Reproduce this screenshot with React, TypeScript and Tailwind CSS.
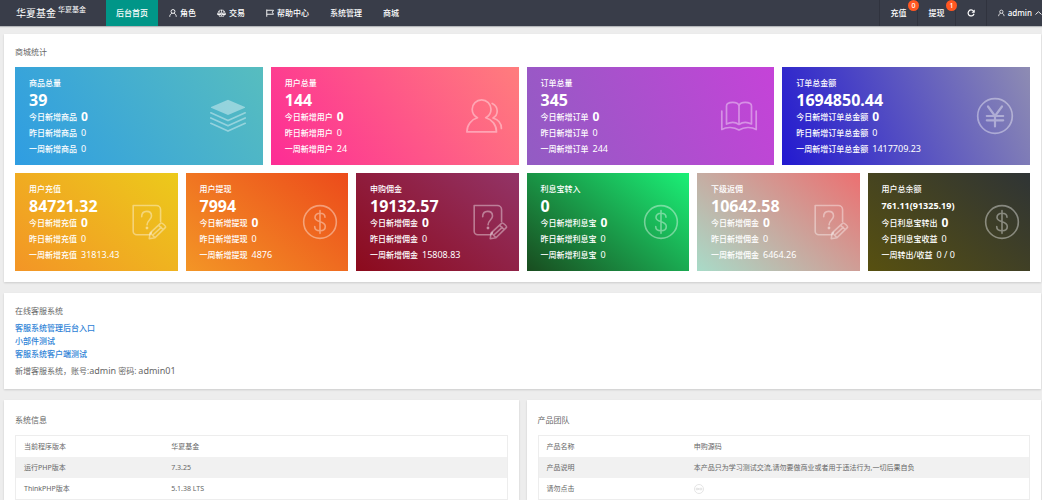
import React from "react";

type IconName = "layers" | "users" | "book" | "yen" | "survey" | "dollar";

interface Stat {
  title: string;
  total: string;
  smallTotal?: boolean;
  rows: [string, string][];
  icon: IconName;
  tone: string;
}

const overview: Stat[] = [
  {
    title: "商品总量",
    total: "39",
    rows: [["今日新增商品", "0"], ["昨日新增商品", "0"], ["一周新增商品", "0"]],
    icon: "layers",
    tone: "bg-linear-55/srgb from-[#2f9de2] to-[#57bdbf]",
  },
  {
    title: "用户总量",
    total: "144",
    rows: [["今日新增用户", "0"], ["昨日新增用户", "0"], ["一周新增用户", "24"]],
    icon: "users",
    tone: "bg-linear-55/srgb from-[#fd2c95] to-[#ff7d7d]",
  },
  {
    title: "订单总量",
    total: "345",
    rows: [["今日新增订单", "0"], ["昨日新增订单", "0"], ["一周新增订单", "244"]],
    icon: "book",
    tone: "bg-linear-67/srgb from-[#925cc3] to-[#c543d8]",
  },
  {
    title: "订单总金额",
    total: "1694850.44",
    rows: [["今日新增订单总金额", "0"], ["昨日新增订单总金额", "0"], ["一周新增订单总金额", "1417709.23"]],
    icon: "yen",
    tone: "bg-linear-67/srgb from-[#2219d0] to-[#8e8cb3]",
  },
];

const finance: Stat[] = [
  {
    title: "用户充值",
    total: "84721.32",
    rows: [["今日新增充值", "0"], ["昨日新增充值", "0"], ["一周新增充值", "31813.43"]],
    icon: "survey",
    tone: "bg-linear-39/srgb from-[#f39526] to-[#ecca1b]",
  },
  {
    title: "用户提现",
    total: "7994",
    rows: [["今日新增提现", "0"], ["昨日新增提现", "0"], ["一周新增提现", "4876"]],
    icon: "dollar",
    tone: "bg-linear-39/srgb from-[#f39526] to-[#ec4b1b]",
  },
  {
    title: "申购佣金",
    total: "19132.57",
    rows: [["今日新增佣金", "0"], ["昨日新增佣金", "0"], ["一周新增佣金", "15808.83"]],
    icon: "survey",
    tone: "bg-linear-39/srgb from-[#8c0a1c] to-[#933467]",
  },
  {
    title: "利息宝转入",
    total: "0",
    rows: [["今日新增利息宝", "0"], ["昨日新增利息宝", "0"], ["一周新增利息宝", "0"]],
    icon: "dollar",
    tone: "bg-linear-39/srgb from-[#194c1f] to-[#1bf077]",
  },
  {
    title: "下级返佣",
    total: "10642.58",
    rows: [["今日新增佣金", "0"], ["昨日新增佣金", "0"], ["一周新增佣金", "6464.26"]],
    icon: "survey",
    tone: "bg-linear-39/srgb from-[#a8dbc8] to-[#ec7071]",
  },
  {
    title: "用户总余额",
    total: "761.11(91325.19)",
    smallTotal: true,
    rows: [["今日利息宝转出", "0"], ["今日利息宝收益", "0"], ["一周转出/收益", "0 / 0"]],
    icon: "dollar",
    tone: "bg-linear-39/srgb from-[#575010] to-[#2f3435]",
  },
];

function CardIcon({ name }: { name: IconName }) {
  return (
    <svg
      viewBox="0 0 36 36"
      className="size-full overflow-visible"
      fill="none"
      stroke="currentColor"
      strokeWidth="1.7"
      strokeLinecap="round"
      strokeLinejoin="round"
      aria-hidden="true"
    >
      {name === "layers" && (
        <>
          <path d="M18 1.700 35 9v.8L18 17 1 9.800V9z" fill="currentColor" stroke="none" />
          <path d="M.8 14.800 18 22.600l17.200-7.800M.8 20 18 27.800 35.200 20M.8 25.300 18 33.100l17.200-7.800" />
        </>
      )}
      {name === "users" && (
        <>
          <path d="M11.500 19.700C8.400 18 6.200 14.900 6.200 11.200a9.400 9.400 0 0 1 18.800 0c0 3.700-2.200 6.800-5.300 8.500 6.400 1.800 10.800 7.300 10.800 14.200H.9c0-6.900 4.200-12.400 10.600-14.200z" />
          <path d="M26.200 5.500c3 1.500 5 4.200 5 7.500 0 3.100-1.700 5.600-4.200 7 5.200 1.500 8.400 5.500 8.400 10.500" />
        </>
      )}
      {name === "book" && (
        <>
          <path d="M5.500 26V8c0-2.400 3-3.700 6.200-3.700S18 5.700 18 8.200c0-2.500 3-3.900 6.300-3.900S30.500 5.600 30.500 8v18c-4.500-2.300-9-2-12.500.5-3.500-2.500-8-2.800-12.500-.5zM18 8.200v18.300" />
          <path d="M.8 13v18.500c5-3 12.200-2.500 17.200.5 5-3 12.200-3.500 17.200-.5V13" />
        </>
      )}
      {name === "yen" && (
        <>
          <circle cx="18" cy="18" r="17.300" />
          <path d="m11 8.500 7 9.500 7-9.500M18 18v10.500M9.800 18h16.400M9.800 22.300h16.400" strokeWidth="2.200" />
        </>
      )}
      {name === "dollar" && (
        <>
          <circle cx="18" cy="18" r="17.300" />
          <path d="M18 6v24M23.300 13c0-2.700-2.200-4.300-5.300-4.300s-5.300 1.700-5.300 4.300c0 6.300 10.900 3.400 10.900 9.700 0 2.800-2.300 4.600-5.600 4.600s-5.600-1.800-5.600-4.600" />
        </>
      )}
      {name === "survey" && (
        <>
          <path d="M17.500 31.500H4A3.800 3.800 0 0 1 .2 27.700V.6h24.600a4.400 4.400 0 0 1 4.400 4.400v12.500M17.500 31.500l2-2.500" />
          <path d="M9.200 12.500c0-3.500 2-5.700 5.200-5.700s5.200 2 5.200 4.900c0 4-4.700 4.500-4.700 9.300" />
          <circle cx="14.800" cy="24.300" r=".7" fill="currentColor" />
          <path d="m17.200 35.700 1-6.200L29.400 19.200c1-.9 5.800 3.300 5 4.500L23.300 34.700zM18.500 29.700l4.600 4.800M27.200 21.500l4.800 4.500M21.900 31l8-7.300" />
        </>
      )}
    </svg>
  );
}

function StatCard({ stat, wide }: { stat: Stat; wide?: boolean }) {
  return (
    <article
      className={`flex items-center justify-between ${stat.tone} ${wide ? "pr-[17px]" : "pr-[11px]"} py-2 pl-[14px] text-white`}
    >
      <div className="whitespace-nowrap text-[8px] leading-4">
        <h3 className="mb-px font-medium">{stat.title}</h3>
        <p className={`mb-px leading-4 font-bold ${stat.smallTotal ? "text-[9px]" : "text-base/4"}`}>{stat.total}</p>
        {stat.rows.map(([label, value], i) => (
          <p key={label} className="flex h-4 items-center gap-1 font-medium">
            <span>{label}</span>
            <span className={i === 0 ? "text-xs/4 font-bold" : "text-[9px] leading-4 font-normal"}>{value}</span>
          </p>
        ))}
      </div>
      <div className={`${wide ? "size-9" : "size-[34px]"} shrink-0 text-white/40`}>
        <CardIcon name={stat.icon} />
      </div>
    </article>
  );
}

function UserIcon() {
  return (
    <svg viewBox="0 0 16 16" className="size-2" fill="none" stroke="currentColor" strokeWidth="1.800" aria-hidden="true">
      <circle cx="8" cy="5" r="3.900" />
      <path d="M1.500 15.500c0-4 2-6 4.800-7M14.500 15.500c0-4-2-6-4.800-7" />
    </svg>
  );
}

function ScaleIcon() {
  return (
    <svg viewBox="0 0 18 16" className="h-2 w-[9px]" fill="none" stroke="currentColor" strokeWidth="1.400" aria-hidden="true">
      <path d="M9 1v13M4 14.500h10M3 4.500C5 2 7 2 9 3c2-1 4-1 6 1.500M4 4 1 10h6.500zM14 4l-3.500 6H17z" />
      <path d="M1 10c.5 3 6 3 6.500 0zM10.500 10c.5 3 6 3 6.500 0z" fill="currentColor" />
    </svg>
  );
}

function FlagIcon() {
  return (
    <svg viewBox="0 0 16 16" className="size-2" fill="none" stroke="currentColor" strokeWidth="1.800" aria-hidden="true">
      <path d="M1.500 1v14.500M1.500 2.500h13.500L12.500 6.500l2.500 4H1.500" />
    </svg>
  );
}

const navItems: { label: string; icon?: React.ReactNode; active?: boolean }[] = [
  { label: "后台首页", active: true },
  { label: "角色", icon: <UserIcon /> },
  { label: "交易", icon: <ScaleIcon /> },
  { label: "帮助中心", icon: <FlagIcon /> },
  { label: "系统管理" },
  { label: "商城" },
];

function Header() {
  return (
    <header className="flex h-[26px] items-stretch bg-[#393d49] text-[8px] font-medium text-white shadow-[0_1px_1px_#b5b7ba]">
      <a href="#home" className="flex w-[106px] shrink-0 items-center gap-[2px] pl-4 text-[10px] font-normal">
        华夏基金
        <span className="mb-[5px] text-[7px]">华夏基金</span>
      </a>
      <nav className="flex gap-px">
        {navItems.map((item) => (
          <a
            key={item.label}
            href="#nav"
            className={`flex items-center gap-[3px] whitespace-nowrap px-[10px] ${item.active ? "bg-[#009688]" : ""}`}
          >
            {item.icon}
            {item.label}
          </a>
        ))}
      </nav>
      <div className="ml-auto flex">
        <PendingLink label="充值" count={0} />
        <PendingLink label="提现" count={1} />
        <button type="button" aria-label="刷新" className="flex w-[31px] items-center justify-center border-l border-[#30333e]">
          <svg viewBox="0 0 16 16" className="size-2" fill="none" stroke="currentColor" strokeWidth="2.400" aria-hidden="true">
            <path d="M13 4.300A6 6 0 1 0 14 9.500" />
            <path d="M15.500 1v6.500H9z" fill="currentColor" stroke="none" />
          </svg>
        </button>
        <button type="button" className="flex w-14 items-center gap-[3px] overflow-hidden border-l border-[#30333e] pl-[11px]">
          <UserIcon />
          <span>admin</span>
          <svg viewBox="0 0 14 8" className="h-1 w-[7px] shrink-0" fill="none" stroke="currentColor" strokeWidth="1.800" aria-hidden="true">
            <path d="m1 7 6-5.500L13 7" />
          </svg>
        </button>
      </div>
    </header>
  );
}

function PendingLink({ label, count }: { label: string; count: number }) {
  return (
    <a href="#pending" className="relative flex w-[38px] items-center justify-center border-l border-[#30333e]">
      {label}
      <span className="absolute top-0 -right-0.5 z-10 flex size-[11px] items-center justify-center rounded-full bg-[#ff5722] text-[7px] leading-none">
        {count}
      </span>
    </a>
  );
}

function Panel({ title, className, children }: { title: string; className: string; children: React.ReactNode }) {
  return (
    <section className={`bg-white px-[11px] shadow-[0_1px_2px_rgba(0,0,0,0.14)] ${className}`}>
      <h2 className="text-[8px] leading-4">{title}</h2>
      {children}
    </section>
  );
}

function InfoTable({ rows }: { rows: [string, React.ReactNode][] }) {
  return (
    <table className="mt-[7px] w-full table-fixed border-separate border-spacing-0 border border-[#ededed] text-left text-[7px] leading-4">
      <tbody>
        {rows.map(([label, value]) => (
          <tr key={label} className="h-[21px] even:bg-[#f1f1f1]">
            <th scope="row" className="w-[30%] p-0 pl-2 font-normal">{label}</th>
            <td className="p-0 pl-2">{value}</td>
          </tr>
        ))}
      </tbody>
    </table>
  );
}

export default function App() {
  return (
    <div className="min-h-screen bg-[#ededed] font-['Noto_Sans','Noto_Sans_CJK_SC',sans-serif] text-[#666]">
      <Header />
      <main className="flex flex-col gap-[11px] pt-2 pr-px pl-1">
        <Panel title="商城统计" className="pt-[10px] pb-[11px]">
          <div className="mt-[7px] grid grid-cols-4 gap-2">
            {overview.map((stat) => (
              <StatCard key={stat.title} stat={stat} wide />
            ))}
          </div>
          <div className="mt-2 grid grid-cols-6 gap-2">
            {finance.map((stat) => (
              <StatCard key={stat.title} stat={stat} />
            ))}
          </div>
        </Panel>

        <Panel title="在线客服系统" className="pt-[10px] pb-[10px]">
          <ul className="mt-0.5 text-[8px] leading-[13px] font-medium text-[#2e82d6]">
            <li><a href="#service-admin">客服系统管理后台入口</a></li>
            <li><a href="#widget">小部件测试</a></li>
            <li><a href="#service-client">客服系统客户端测试</a></li>
          </ul>
          <p className="mt-[3px] h-4 text-[8px] leading-4">
            新增客服系统，账号:<span className="text-[9px]">admin</span> 密码: <span className="text-[9px]">admin01</span>
          </p>
        </Panel>

        <div className="grid grid-cols-2 gap-2">
          <Panel title="系统信息" className="pt-3">
            <InfoTable
              rows={[
                ["当前程序版本", "华夏基金"],
                ["运行PHP版本", "7.3.25"],
                ["ThinkPHP版本", "5.1.38 LTS"],
              ]}
            />
          </Panel>
          <Panel title="产品团队" className="pt-3">
            <InfoTable
              rows={[
                ["产品名称", "申购源码"],
                ["产品说明", "本产品只为学习测试交流,请勿要做商业或者用于违法行为,一切后果自负"],
                [
                  "请勿点击",
                  <svg key="seal" viewBox="0 0 20 20" className="size-[10px]" fill="none" stroke="#dcdcdc" strokeWidth="1.500" aria-hidden="true">
                    <circle cx="10" cy="10" r="9" />
                    <path d="M4.500 8.500v3h3v-3zM9 8v4M11.500 8.500v3h4v-3z" />
                  </svg>,
                ],
              ]}
            />
          </Panel>
        </div>
      </main>
    </div>
  );
}
